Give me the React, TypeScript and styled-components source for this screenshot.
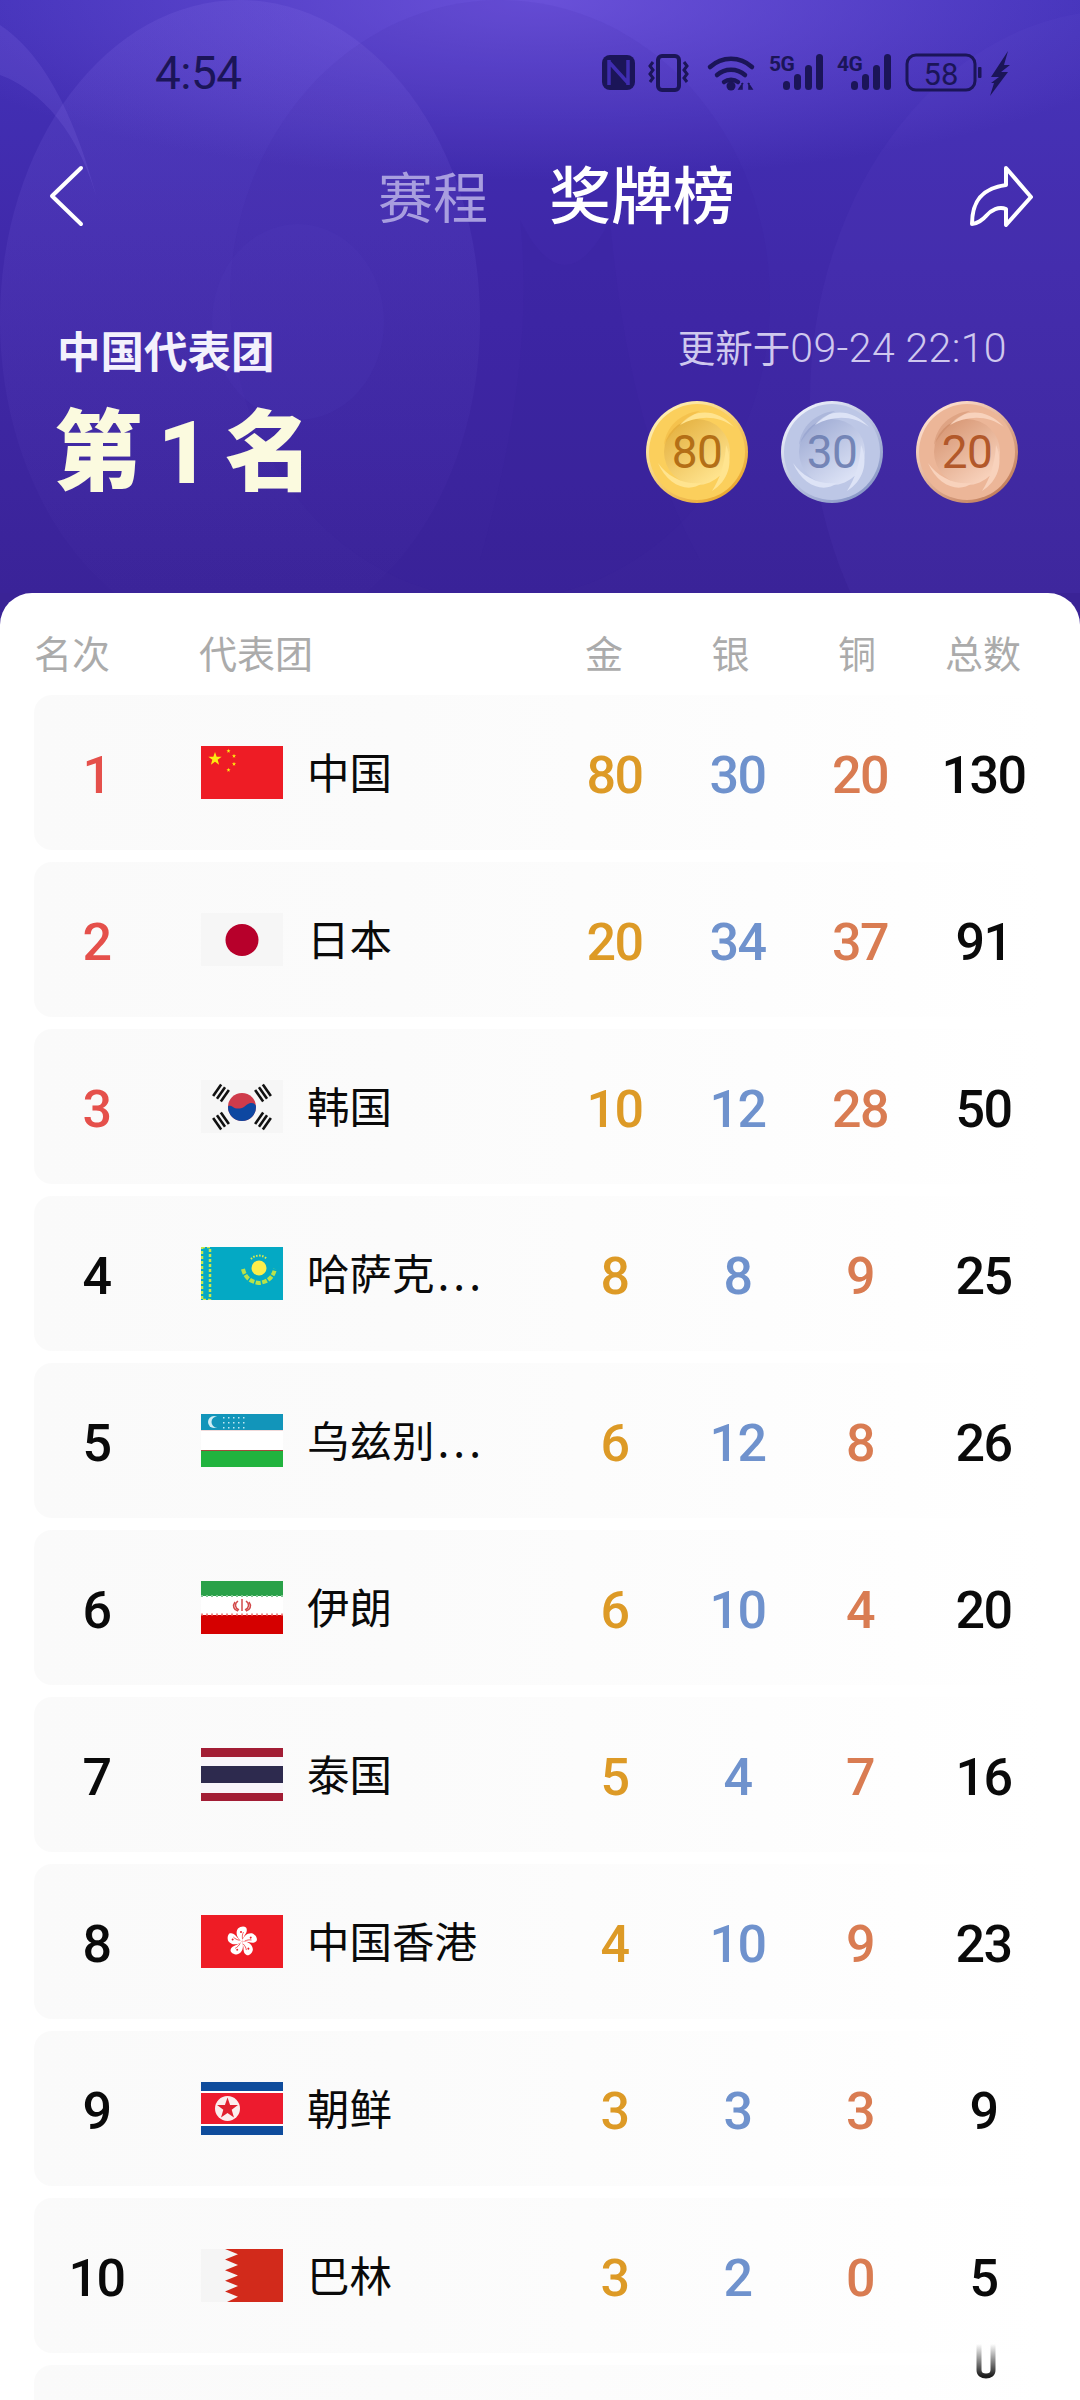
import React from "react";
import styled, { createGlobalStyle } from "styled-components";

const CJK = `Roboto, "Noto Sans CJK SC", sans-serif`;

const Global = createGlobalStyle`
  html, body { margin: 0; padding: 0; background: #fff; }
  body { font-family: ${CJK}; }
`;

const Page = styled.div`
  position: relative;
  width: 1080px;
  height: 2400px;
  overflow: hidden;
  background: #3a2396;
`;

const Hero = styled.header`
  position: relative;
  height: 593px;
  display: flex;
  flex-direction: column;
  overflow: hidden;
  background: linear-gradient(180deg, #4231b8 0%, #4029a9 45%, #3a2398 100%);
`;

const HeroArt = styled.svg`
  position: absolute;
  inset: 0;
  width: 1080px;
  height: 593px;
`;

const StatusBar = styled.div`
  position: relative;
  height: 145px;
  padding: 45px 0 0 155px;
  box-sizing: border-box;
  display: flex;
  align-items: flex-start;
`;

const Time = styled.span`
  font-size: 46px;
  line-height: 56px;
  color: #1b1558;
  letter-spacing: -0.5px;
`;

const StatusIcons = styled.svg`
  position: absolute;
  left: 595px;
  top: 45px;
  width: 425px;
  height: 55px;
`;

const Nav = styled.nav`
  position: relative;
  height: 175px;
  padding: 20px 47px 0 46px;
  box-sizing: border-box;
  display: flex;
  align-items: flex-start;
`;

const Tabs = styled.div`
  margin-left: 294px;
  margin-top: -1px;
  display: flex;
  align-items: center;
  gap: 61px;
  height: 70px;
`;

const Tab = styled.span<{ $active?: boolean }>`
  font-size: ${(p) => (p.$active ? "62px" : "55px")};
  font-weight: ${(p) => (p.$active ? 500 : 400)};
  line-height: 70px;
  margin-top: ${(p) => (p.$active ? "-3px" : "0")};
  color: ${(p) => (p.$active ? "#ffffff" : "#a89edf")};
`;

const ShareButton = styled.svg`
  margin-left: auto;
`;

const Summary = styled.section`
  position: relative;
  display: flex;
  justify-content: space-between;
  padding: 0 62px 0 58px;
`;

const Team = styled.div`
  display: flex;
  flex-direction: column;
`;

const TeamName = styled.div`
  font-size: 43.5px;
  font-weight: 700;
  line-height: 60px;
  margin: 4px 0 0 -1px;
  color: #f3f1fc;
`;

const Rank = styled.div`
  font-size: 88px;
  font-weight: 900;
  line-height: 100px;
  margin: 19px 0 0 -4px;
  letter-spacing: 16px;
  color: #fbfadf;
`;

const Tally = styled.div`
  display: flex;
  flex-direction: column;
  align-items: flex-end;
`;

const Updated = styled.div`
  font-size: 37.5px;
  line-height: 50px;
  margin: 3px 11px 0 0;
  color: #cfc8ee;
`;

const UpdatedTime = styled.span`
  font-size: 41px;
  font-weight: 300;
  letter-spacing: 0.4px;
`;

const Medals = styled.div`
  display: flex;
  gap: 33px;
  margin-top: 27px;
`;

const MedalBadge = styled.div`
  position: relative;
  width: 102px;
  height: 102px;
  display: flex;
  align-items: center;
  justify-content: center;
`;

const MedalArt = styled.svg`
  position: absolute;
  inset: 0;
`;

const MedalCount = styled.span<{ $color: string }>`
  position: relative;
  font-size: 46px;
  color: ${(p) => p.$color};
  letter-spacing: -0.5px;
`;

const Board = styled.main`
  position: relative;
  margin-top: 0;
  padding: 41px 34px 0;
  background: #fff;
  border-radius: 32px 32px 0 0;
`;

const HeadRow = styled.div`
  display: grid;
  grid-template-columns: 165px 342px 126px 127px 126px 1fr;
  height: 42px;
  margin-bottom: 19px;
`;

const HeadCell = styled.span<{ $center?: boolean }>`
  font-size: 38px;
  line-height: 42px;
  color: #ababab;
  text-align: ${(p) => (p.$center ? "center" : "left")};
`;

const Rows = styled.div`
  display: flex;
  flex-direction: column;
  gap: 12px;
`;

const Row = styled.div`
  flex: none;
  height: 155px;
  display: grid;
  grid-template-columns: 125px 394px 123px 123px 122px 1fr;
  align-items: center;
  border-radius: 18px;
  background: linear-gradient(90deg, #fafafa 0%, #fbfbfb 36%, #fdfdfd 72%, #ffffff 100%);
`;

const Num = styled.span<{ $color: string }>`
  font-size: 52px;
  font-weight: 500;
  line-height: 60px;
  margin-top: 6px;
  text-align: center;
  color: ${(p) => p.$color};
  letter-spacing: -1.5px;
`;

const Country = styled.div`
  display: flex;
  align-items: center;
  gap: 24px;
  padding-left: 42px;
`;

const FlagBox = styled.svg`
  flex: none;
  display: block;
  width: 82px;
  height: 53px;
`;

const Name = styled.span`
  font-family: "Noto Sans CJK SC", sans-serif;
  font-size: 42.5px;
  line-height: 50px;
  margin-top: -3px;
  color: #0a0a0a;
  white-space: nowrap;
`;

const Dots = styled.span`
  margin-left: 3px;
  letter-spacing: 4px;
`;

const Watermark = styled.svg`
  position: absolute;
  left: 905px;
  top: 2340px;
  width: 155px;
  height: 42px;
`;

const star = (cx: number, cy: number, r: number, rot = -90) => {
  const pts: string[] = [];
  for (let i = 0; i < 10; i++) {
    const rad = i % 2 ? r * 0.4 : r;
    const a = ((rot + i * 36) * Math.PI) / 180;
    pts.push(`${(cx + rad * Math.cos(a)).toFixed(2)},${(cy + rad * Math.sin(a)).toFixed(2)}`);
  }
  return pts.join(" ");
};

const Flag = ({ children }: { children: React.ReactNode }) => (
  <FlagBox viewBox="0 0 82 53">{children}</FlagBox>
);

const China = () => (
  <Flag>
    <rect width="82" height="53" fill="#ee1c25" />
    <polygon points={star(14, 13, 7)} fill="#fde910" />
    <polygon points={star(27.5, 5, 2.2)} fill="#fde910" />
    <polygon points={star(33, 10, 2.2)} fill="#fde910" />
    <polygon points={star(33, 18, 2.2)} fill="#fde910" />
    <polygon points={star(27.5, 24, 2.2)} fill="#fde910" />
  </Flag>
);

const Japan = () => (
  <Flag>
    <rect width="82" height="53" fill="#f6f6f6" />
    <ellipse cx="41" cy="27" rx="16.5" ry="16" fill="#b7002b" />
  </Flag>
);

const Korea = () => {
  const bars = (x: number, y: number, rot: number) => (
    <g transform={`translate(${x} ${y}) rotate(${rot})`} fill="#111">
      <rect x="-7" y="-6" width="14" height="2.6" />
      <rect x="-7" y="-1.3" width="14" height="2.6" />
      <rect x="-7" y="3.4" width="14" height="2.6" />
    </g>
  );
  return (
    <Flag>
      <rect width="82" height="53" fill="#f6f6f6" />
      <circle cx="41" cy="27" r="14" fill="#cf3b4b" />
      <path d="M27 27a14 14 0 0 0 28 0c0-3-3-5-7-3.5-3 1.2-4 3.5-7 4.5-4 1.200-7 .5-9-1-2-1.500-5-2-5 0z" fill="#0d47a1" />
      {bars(20, 13, -55)}
      {bars(62, 13, 55)}
      {bars(20, 41, 55)}
      {bars(62, 41, -55)}
    </Flag>
  );
};

const Kazakhstan = () => (
  <Flag>
    <rect width="82" height="53" fill="#04a9c4" />
    <rect x="1" y="0" width="8" height="53" fill="none" stroke="#c8e84a" strokeWidth="2.500" strokeDasharray="3 2" />
    <circle cx="58" cy="21" r="7.500" fill="#fcee4a" />
    <path d="M42 22c2 9 8 13 16 14 8-1 14-5 16-14" fill="none" stroke="#b9e24a" strokeWidth="4" strokeDasharray="5 1.500" />
    <path d="M50 12a11 11 0 0 1 16 0" fill="none" stroke="#dfe94a" strokeWidth="2" strokeDasharray="1.500 1.500" />
  </Flag>
);

const Uzbekistan = () => (
  <Flag>
    <rect width="82" height="16" fill="#1295ba" />
    <rect y="16" width="82" height="21" fill="#ffffff" />
    <rect y="16" width="82" height="1" fill="#f0dada" />
    <rect y="36" width="82" height="1" fill="#a14a3a" />
    <rect y="37" width="82" height="16" fill="#21b33e" />
    <circle cx="13" cy="8" r="6" fill="#cfeef5" />
    <circle cx="16" cy="8" r="5.500" fill="#1295ba" />
    {[22, 27, 32, 37, 42].map((x) =>
      [3, 8, 13].map((y) => <rect key={`${x}-${y}`} x={x} y={y} width="1.500" height="1.500" fill="#bfe8f2" />)
    )}
  </Flag>
);

const Iran = () => (
  <Flag>
    <rect width="82" height="15" fill="#2aa149" />
    <rect y="15" width="82" height="19" fill="#ffffff" />
    <rect y="34" width="82" height="19" fill="#d50000" />
    <path d="M0 15h82" stroke="#7fc793" strokeWidth="2" strokeDasharray="2 3" />
    <path d="M0 33.500h82" stroke="#e88" strokeWidth="2" strokeDasharray="2 3" />
    <g fill="none" stroke="#d24a4a" strokeWidth="1.500">
      <path d="M41 18v12" />
      <path d="M37 20c-4 3-3 7 1 9M45 20c4 3 3 7-1 9" />
      <path d="M34 21c-3 4-1 8 3 9M48 21c3 4 1 8-3 9" />
    </g>
  </Flag>
);

const Thailand = () => (
  <Flag>
    <rect width="82" height="53" fill="#f8f5fa" />
    <rect width="82" height="9" fill="#a21d35" />
    <rect y="18" width="82" height="17" fill="#2d2a4e" />
    <rect y="45" width="82" height="8" fill="#a21d35" />
  </Flag>
);

const HongKong = () => (
  <Flag>
    <rect width="82" height="53" fill="#ee1c25" />
    {[0, 72, 144, 216, 288].map((r) => (
      <g key={r} transform={`rotate(${r} 41 26.500)`}>
        <path d="M41 26.500c-5-3-7-9-4-13 2-2 6-3 8-1 2 3 0 6-1.500 8-1 2-2 4-2.500 6z" fill="#ffffff" />
        <circle cx="40" cy="17" r="1" fill="#ee1c25" />
        <path d="M41.500 24c-.5-3 0-5 1-7" stroke="#ee1c25" strokeWidth=".7" fill="none" />
      </g>
    ))}
  </Flag>
);

const NorthKorea = () => (
  <Flag>
    <rect width="82" height="53" fill="#0f4c9c" />
    <rect y="9" width="82" height="35" fill="#ffffff" />
    <rect y="11" width="82" height="31" fill="#ed1b2e" />
    <circle cx="26.500" cy="26.500" r="12.500" fill="#fbeeee" />
    <polygon points={star(26.5, 26.5, 11)} fill="#e0202f" />
  </Flag>
);

const Bahrain = () => (
  <Flag>
    <rect width="82" height="53" fill="#f5f5f5" />
    <polygon
      points="82,0 24,0 37,5.300 24,10.600 37,15.900 24,21.200 37,26.500 24,31.800 37,37.100 24,42.400 37,47.700 26,53 82,53"
      fill="#d22a1b"
    />
  </Flag>
);

type MedalTone = { id: string; rim: string; rimDark: string; face: string; faceDark: string; swirl: string; text: string };

const tones: Record<string, MedalTone> = {
  gold: { id: "g", rim: "#fff0b5", rimDark: "#e8a52a", face: "#fbcf5c", faceDark: "#e6b445", swirl: "#ffe48f", text: "#b46f16" },
  silver: { id: "s", rim: "#eef1fb", rimDark: "#8493c4", face: "#bdc7e6", faceDark: "#a3afd6", swirl: "#dde3f6", text: "#7485b6" },
  bronze: { id: "b", rim: "#ffe2d2", rimDark: "#bf7a56", face: "#ecb698", faceDark: "#d99a78", swirl: "#f8d2bc", text: "#b2582a" },
};

const Medal = ({ tone, value }: { tone: MedalTone; value: number }) => (
  <MedalBadge>
    <MedalArt width="102" height="102" viewBox="0 0 102 102">
      <defs>
        <linearGradient id={`${tone.id}r`} x1="0.15" y1="0.1" x2="0.85" y2="0.95">
          <stop offset="0" stopColor={tone.rim} />
          <stop offset="1" stopColor={tone.rimDark} />
        </linearGradient>
        <linearGradient id={`${tone.id}f`} x1="0.2" y1="0.1" x2="0.8" y2="0.9">
          <stop offset="0" stopColor={tone.faceDark} />
          <stop offset="1" stopColor={tone.swirl} />
        </linearGradient>
      </defs>
      <circle cx="51" cy="51" r="51" fill={`url(#${tone.id}r)`} />
      <circle cx="51" cy="51" r="48" fill={tone.face} />
      <circle cx="51" cy="51" r="33" fill={`url(#${tone.id}f)`} />
      <path d="M34 24C46 8 70 6 88 26 72 14 52 14 34 24z" fill={tone.swirl} />
      <path d="M80 44c8 18 2 36-14 46 8-12 13-28 14-46z" fill={tone.swirl} />
      <path d="M12 62c10 14 26 22 44 20-12 10-34 4-44-20z" fill={tone.swirl} />
      <path d="M18 44C20 26 34 12 54 10 38 18 26 30 18 44z" fill={tone.rimDark} opacity=".3" />
    </MedalArt>
    <MedalCount $color={tone.text}>{value}</MedalCount>
  </MedalBadge>
);

type Entry = { rank: number; name: string; cut?: boolean; flag: React.FC; g: number; s: number; b: number; t: number };

const entries: Entry[] = [
  { rank: 1, name: "中国", flag: China, g: 80, s: 30, b: 20, t: 130 },
  { rank: 2, name: "日本", flag: Japan, g: 20, s: 34, b: 37, t: 91 },
  { rank: 3, name: "韩国", flag: Korea, g: 10, s: 12, b: 28, t: 50 },
  { rank: 4, name: "哈萨克", cut: true, flag: Kazakhstan, g: 8, s: 8, b: 9, t: 25 },
  { rank: 5, name: "乌兹别", cut: true, flag: Uzbekistan, g: 6, s: 12, b: 8, t: 26 },
  { rank: 6, name: "伊朗", flag: Iran, g: 6, s: 10, b: 4, t: 20 },
  { rank: 7, name: "泰国", flag: Thailand, g: 5, s: 4, b: 7, t: 16 },
  { rank: 8, name: "中国香港", flag: HongKong, g: 4, s: 10, b: 9, t: 23 },
  { rank: 9, name: "朝鲜", flag: NorthKorea, g: 3, s: 3, b: 3, t: 9 },
  { rank: 10, name: "巴林", flag: Bahrain, g: 3, s: 2, b: 0, t: 5 },
];

const Bars = ({ x }: { x: number }) => (
  <g fill="#1b1558">
    <rect x={x} y="27" width="7" height="9" rx="3.500" />
    <rect x={x + 11} y="20" width="7" height="16" rx="3.500" />
    <rect x={x + 22} y="11" width="7" height="25" rx="3.500" />
    <rect x={x + 33} y="0" width="7" height="36" rx="3.500" />
  </g>
);

export default function App() {
  return (
    <Page>
      <Global />
      <Hero>
        <HeroArt viewBox="0 0 1080 593">
          <defs>
            <radialGradient id="glow" cx="0.5" cy="0" r="0.6">
              <stop offset="0" stopColor="#7a5ee6" stopOpacity=".7" />
              <stop offset="1" stopColor="#7a5ee6" stopOpacity="0" />
            </radialGradient>
            <linearGradient id="fade" x1="0" y1="0" x2="0" y2="1">
              <stop offset="0" stopColor="#8f78ee" stopOpacity=".16" />
              <stop offset="1" stopColor="#8f78ee" stopOpacity="0" />
            </linearGradient>
          </defs>
          <rect width="1080" height="300" fill="url(#glow)" />
          <ellipse cx="240" cy="320" rx="240" ry="320" fill="url(#fade)" />
          <ellipse cx="500" cy="300" rx="270" ry="300" fill="#2f1d95" opacity=".08" />
          <ellipse cx="298" cy="322" rx="86" ry="98" fill="#6a4fd0" opacity=".07" />
          <path d="M0 25C30 45 70 90 100 210 80 130 40 90 0 75z" fill="#8a74ea" opacity=".18" />
          <ellipse cx="1120" cy="400" rx="310" ry="390" fill="#7a62e0" opacity=".07" />
          <path d="M480 560c40-140 50-250 40-340 30 60 60 60 90 0 10 110 30 230 90 340z" fill="#35208f" opacity=".1" />
        </HeroArt>
        <StatusBar>
          <Time>4:54</Time>
          <StatusIcons viewBox="0 0 425 55">
            <rect x="7" y="10" width="33" height="35" rx="8" fill="#1b1558" />
            <path d="M14 15v25M33 15v25M14 17l19 21" stroke="#3f2db0" strokeWidth="3.500" fill="none" />
            <rect x="63" y="11" width="21" height="34" rx="4" fill="none" stroke="#1b1558" strokeWidth="4" />
            <path d="M58 17l-3 4 3 4-3 4 3 4-3 4M89 17l3 4-3 4 3 4-3 4 3 4" fill="none" stroke="#1b1558" strokeWidth="3" />
            <g fill="none" stroke="#1b1558" strokeWidth="4.500" strokeLinecap="round">
              <path d="M115 22c12-11 30-11 42 0" />
              <path d="M122 30c8-7 20-7 28 0" />
              <path d="M129 37c4-3 10-3 14 0" />
            </g>
            <circle cx="136" cy="41" r="4.500" fill="#1b1558" />
            <path d="M148 38l-4 6h3v-6M153 38l4 6h-3v-6" stroke="#1b1558" strokeWidth="1.500" fill="none" />
            <g transform="translate(0 9)">
              <Bars x={188} />
              <Bars x={256} />
            </g>
            <text x="174" y="26" fontFamily="Roboto, sans-serif" fontSize="21" fontWeight="700" fill="#1b1558" letterSpacing="-.5">5G</text>
            <text x="242" y="26" fontFamily="Roboto, sans-serif" fontSize="21" fontWeight="700" fill="#1b1558" letterSpacing="-.5">4G</text>
            <rect x="312" y="10" width="68" height="35" rx="9" fill="none" stroke="#1b1558" strokeWidth="3" />
            <rect x="383" y="22" width="3.500" height="11" rx="1" fill="#1b1558" />
            <text x="346" y="40" textAnchor="middle" fontFamily="Roboto, sans-serif" fontSize="31" fill="#1b1558">58</text>
            <path d="M413 6l-17 26h8l-8 6 3 0-4 13 18-24h-7l9-7h-6z" fill="#1b1558" />
          </StatusIcons>
        </StatusBar>
        <Nav>
          <svg width="38" height="62" viewBox="0 0 38 62" fill="none" stroke="#fff" strokeWidth="4" strokeLinecap="round" strokeLinejoin="round">
            <path d="M35 3L6 31l29 28" />
          </svg>
          <Tabs>
            <Tab>赛程</Tab>
            <Tab $active>奖牌榜</Tab>
          </Tabs>
          <ShareButton width="65" height="62" viewBox="0 0 65 62" fill="none" stroke="#fff" strokeWidth="4" strokeLinejoin="round" strokeLinecap="round">
            <path d="M38 3l25 29-25 28V44c-7-3-15 1-20 7-3 3.500-9 8-14 8 0-14 3-35 34-39z" />
          </ShareButton>
        </Nav>
        <Summary>
          <Team>
            <TeamName>中国代表团</TeamName>
            <Rank>第1名</Rank>
          </Team>
          <Tally>
            <Updated>
              更新于<UpdatedTime>09-24 22:10</UpdatedTime>
            </Updated>
            <Medals>
              <Medal tone={tones.gold} value={80} />
              <Medal tone={tones.silver} value={30} />
              <Medal tone={tones.bronze} value={20} />
            </Medals>
          </Tally>
        </Summary>
      </Hero>
      <Board>
        <HeadRow>
          <HeadCell>名次</HeadCell>
          <HeadCell>代表团</HeadCell>
          <HeadCell $center>金</HeadCell>
          <HeadCell $center>银</HeadCell>
          <HeadCell $center>铜</HeadCell>
          <HeadCell $center>总数</HeadCell>
        </HeadRow>
        <Rows>
          {entries.map((e) => {
            const FlagIcon = e.flag;
            return (
              <Row key={e.rank}>
                <Num $color={e.rank <= 3 ? "#e5504b" : "#0a0a0a"}>{e.rank}</Num>
                <Country>
                  <FlagIcon />
                  <Name>
                    {e.name}
                    {e.cut && <Dots>...</Dots>}
                  </Name>
                </Country>
                <Num $color="#dd9a26">{e.g}</Num>
                <Num $color="#6f92cd">{e.s}</Num>
                <Num $color="#d97c52">{e.b}</Num>
                <Num $color="#0a0a0a">{e.t}</Num>
              </Row>
            );
          })}
          <Row />
        </Rows>
      </Board>
      <Watermark viewBox="0 0 155 42">
        <defs>
          <linearGradient id="wm" x1="0" y1="0" x2="0" y2="1">
            <stop offset="0" stopColor="#111" stopOpacity="0" />
            <stop offset="1" stopColor="#111" stopOpacity=".95" />
          </linearGradient>
        </defs>
        <path d="M74 4v26c0 4 3 6 7 6s7-2 7-6V4" fill="none" stroke="url(#wm)" strokeWidth="5" />
      </Watermark>
    </Page>
  );
}
